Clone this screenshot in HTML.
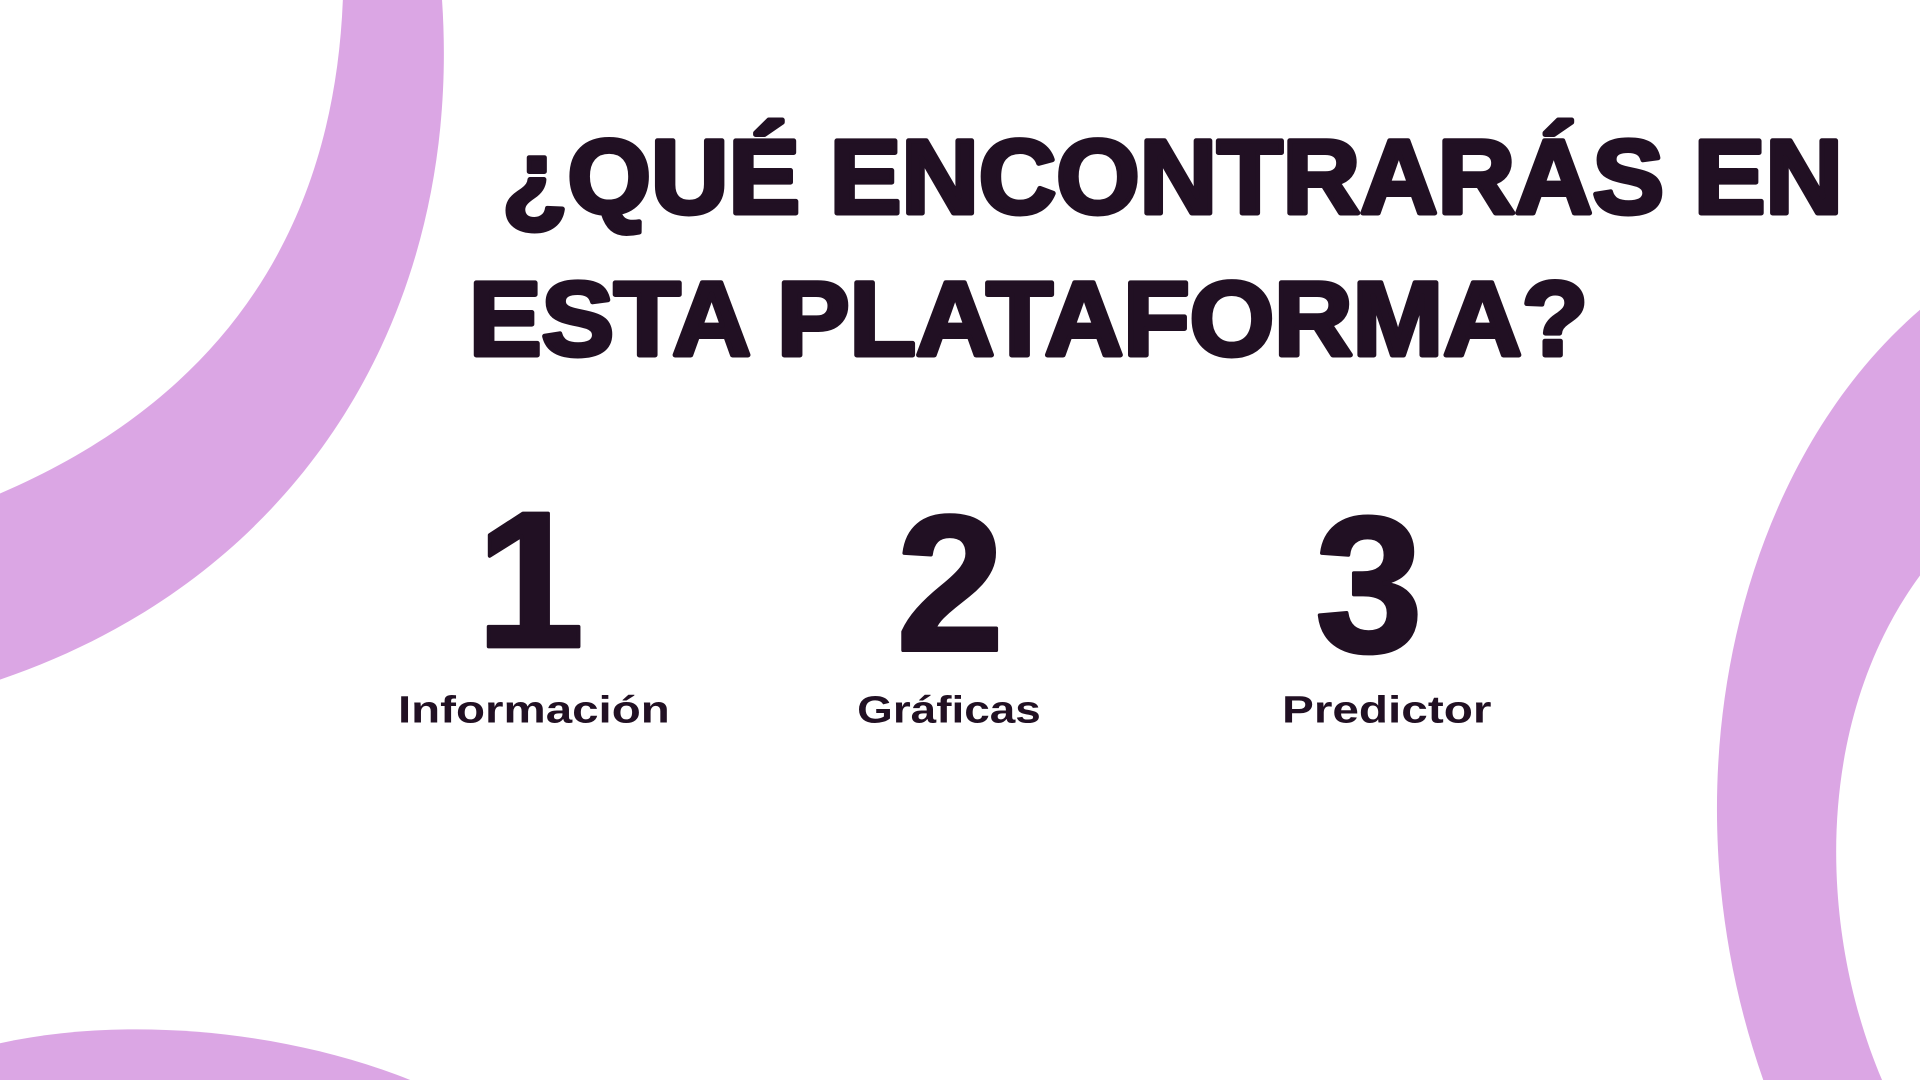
<!DOCTYPE html>
<html><head><meta charset="utf-8"><style>
html,body{margin:0;padding:0;background:#fff;width:1920px;height:1080px;overflow:hidden}
svg{display:block}
</style></head><body>
<svg width="1920" height="1080" viewBox="0 0 1568 882" preserveAspectRatio="none" xmlns="http://www.w3.org/2000/svg">
<g fill="#dba6e4">
<path d="M280,0 L361,0 C378,250 250,470 0,555 L0,403 C170,330 272,200 280,0 Z"/>
<path d="M1568,253 C1420,380 1355,640 1440,882 L1537,882 C1485,760 1480,590 1568,470 Z"/>
<path d="M0,852 C100,830 230,840 335,882 L0,882 Z"/>
</g>
<g fill="#211023" stroke="#211023" stroke-linejoin="round" font-family="'Liberation Sans', 'DejaVu Sans', sans-serif" font-weight="900">
<text x="410" y="174" font-size="86" stroke-width="4" textLength="1095" lengthAdjust="spacingAndGlyphs">¿QUÉ ENCONTRARÁS EN</text>
<text x="383" y="290" font-size="86" stroke-width="4" textLength="914" lengthAdjust="spacingAndGlyphs">ESTA PLATAFORMA?</text>
<text x="433" y="528" font-size="158" stroke-width="3" text-anchor="middle">1</text>
<text x="776" y="531" font-size="158" stroke-width="3" text-anchor="middle">2</text>
<text x="1118" y="532" font-size="158" stroke-width="3" text-anchor="middle">3</text>
</g>
<g fill="#211023" font-family="'Liberation Sans', 'DejaVu Sans', sans-serif" font-weight="700" font-size="31">
<text x="325" y="590" textLength="222" lengthAdjust="spacingAndGlyphs">Información</text>
<text x="700" y="590" textLength="150" lengthAdjust="spacingAndGlyphs">Gráficas</text>
<text x="1047" y="590" textLength="171" lengthAdjust="spacingAndGlyphs">Predictor</text>
</g>
</svg>
</body></html>
